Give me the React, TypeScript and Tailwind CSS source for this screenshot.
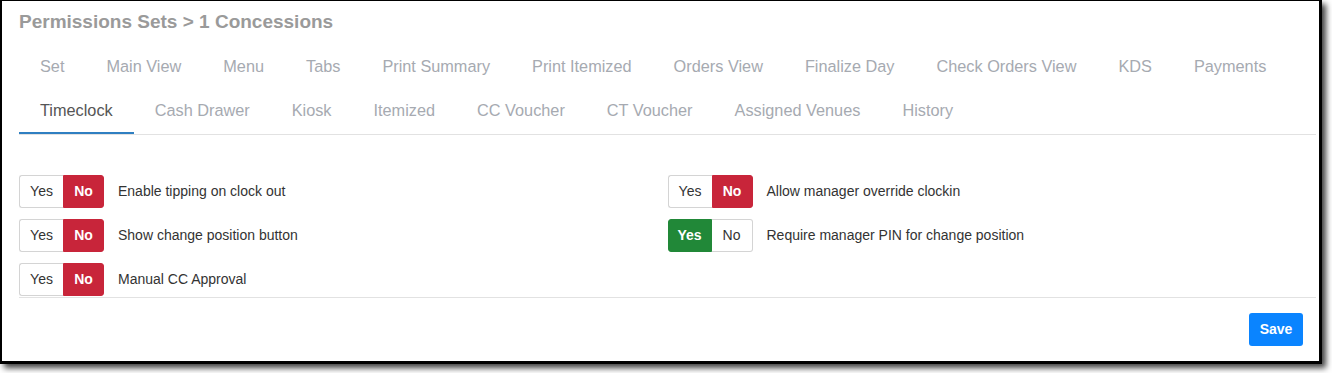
import { useState } from "react";

const ROW1 = ["Set", "Main View", "Menu", "Tabs", "Print Summary", "Print Itemized", "Orders View", "Finalize Day", "Check Orders View", "KDS", "Payments"];
const ROW2 = ["Timeclock", "Cash Drawer", "Kiosk", "Itemized", "CC Voucher", "CT Voucher", "Assigned Venues", "History"];

type Setting = { label: string; value: boolean };

function YesNo({ value, onChange }: { value: boolean; onChange: (v: boolean) => void }) {
  return (
    <div className="flex h-[33px] shrink-0">
      <button
        onClick={() => onChange(true)}
        className={`w-[44px] rounded-l-[3px] border text-[14px] ${value ? "bg-[#218838] border-[#218838] text-white font-semibold" : "bg-white border-[#d4d4d4] border-r-0 text-[#333]"}`}
      >
        Yes
      </button>
      <button
        onClick={() => onChange(false)}
        className={`w-[41px] rounded-r-[3px] border text-[14px] ${!value ? "bg-[#c8253a] border-[#c8253a] text-white font-semibold" : "bg-white border-[#d4d4d4] border-l-0 text-[#333]"}`}
      >
        No
      </button>
    </div>
  );
}

export default function App() {
  const [left, setLeft] = useState<Setting[]>([
    { label: "Enable tipping on clock out", value: false },
    { label: "Show change position button", value: false },
    { label: "Manual CC Approval", value: false },
  ]);
  const [right, setRight] = useState<Setting[]>([
    { label: "Allow manager override clockin", value: false },
    { label: "Require manager PIN for change position", value: true },
  ]);
  const [tab, setTab] = useState("Timeclock");

  function renderColumn(items: Setting[], set: (s: Setting[]) => void) {
    return (
      <div className="flex flex-col gap-[11px]">
        {items.map((s, i) => (
          <div key={s.label} className="flex items-center gap-[14px]">
            <YesNo
              value={s.value}
              onChange={(v) => set(items.map((it, j) => (j === i ? { ...it, value: v } : it)))}
            />
            <span className="text-[14px] text-[#333]">{s.label}</span>
          </div>
        ))}
      </div>
    );
  }

  function renderTabs(items: string[], last: boolean) {
    return (
      <div className="flex">
        {items.map((t) => (
          <button
            key={t}
            onClick={() => setTab(t)}
            className={`px-[21px] text-[16.3px] border-b-2 ${last ? "h-[46px]" : "h-[44px] pt-[2px]"} ${tab === t ? "text-[#555] border-[#2f7fc1]" : "text-[#a6aab1] border-transparent"}`}
          >
            {t}
          </button>
        ))}
      </div>
    );
  }

  return (
    <div className="w-[1332px] h-[373px] bg-white font-['Liberation_Sans',sans-serif]">
      <div className="w-[1322px] h-[364px] bg-white border-black border-l-2 border-t border-r-[3px] border-b-[3px] shadow-[4px_4px_6px_rgba(0,0,0,0.75)] flex flex-col pl-[17px] pr-[3px]">
        <h1 className="h-[43px] pt-[7px] text-[19px] font-semibold text-[#9a9a9a]">Permissions Sets &gt; 1 Concessions</h1>
        <div className="border-b border-[#e2e2e2]">
          {renderTabs(ROW1, false)}
          {renderTabs(ROW2, true)}
        </div>
        <div className="grid grid-cols-2 pt-[40px] pb-[1px] border-b border-[#e2e2e2]">
          {renderColumn(left, setLeft)}
          {renderColumn(right, setRight)}
        </div>
        <div className="flex justify-end pt-[15px] pr-[13px]">
          <button className="h-[33px] w-[54px] rounded-[3px] bg-[#0a84ff] text-white text-[14px] font-semibold">Save</button>
        </div>
      </div>
    </div>
  );
}
